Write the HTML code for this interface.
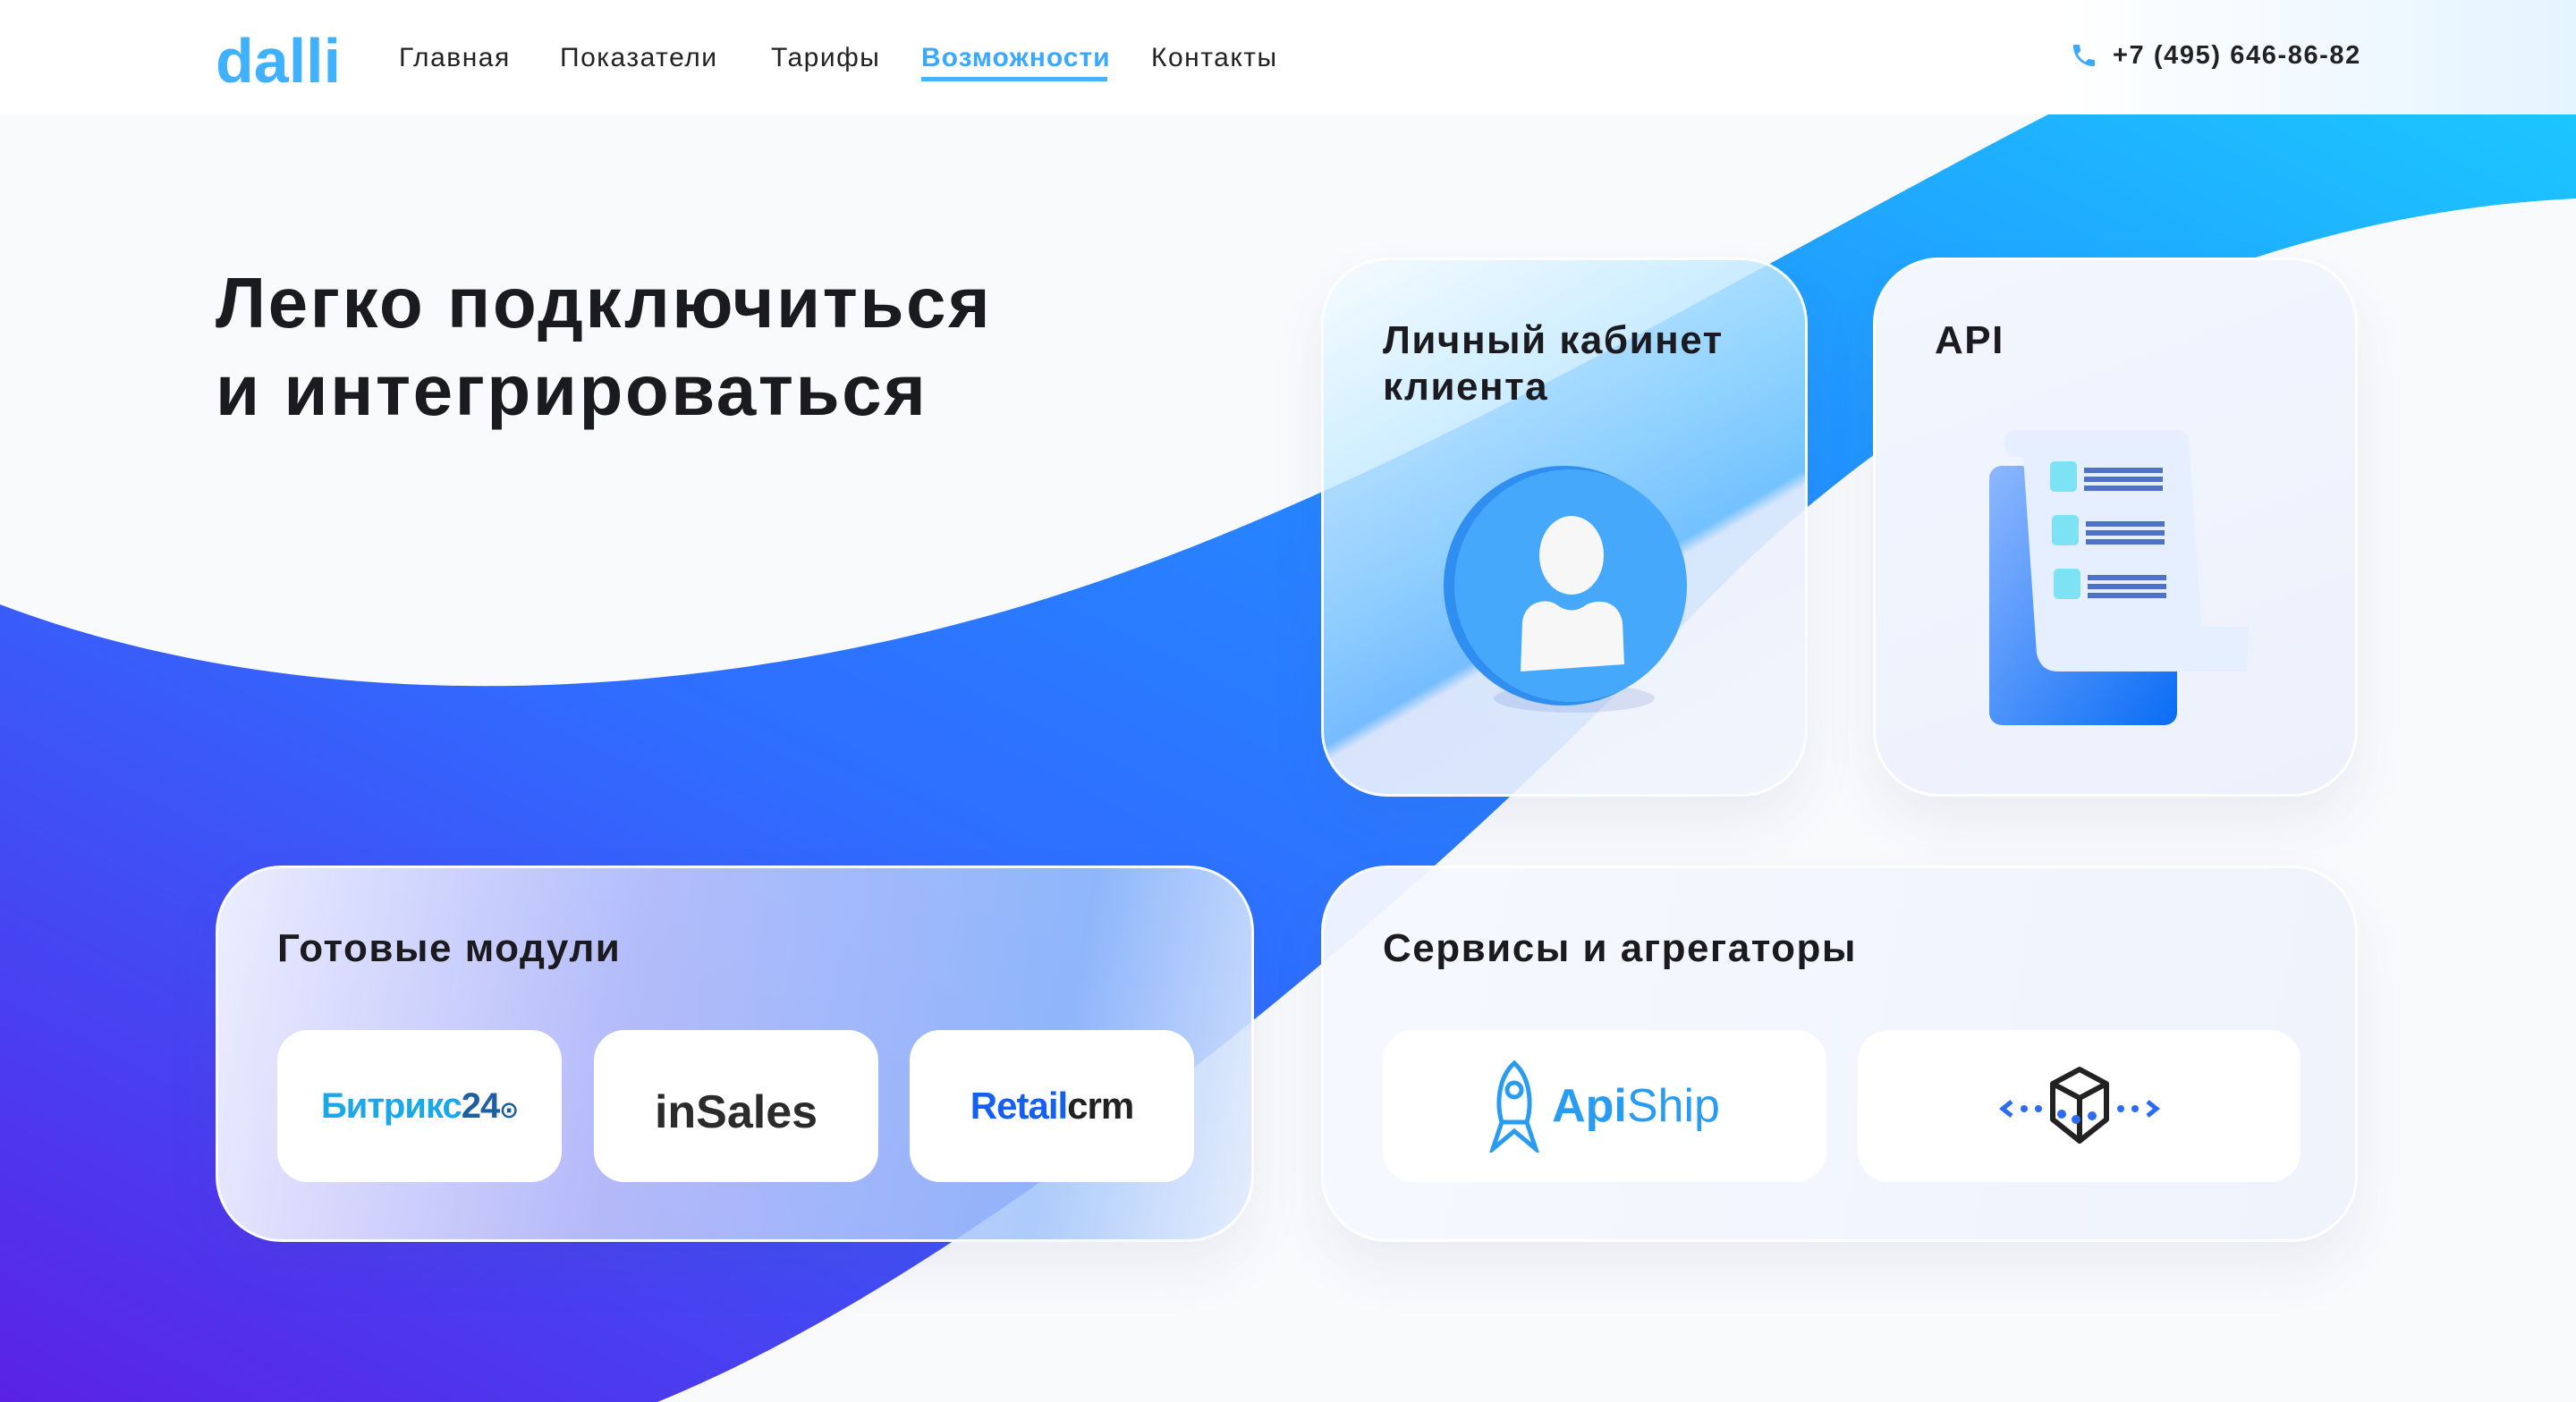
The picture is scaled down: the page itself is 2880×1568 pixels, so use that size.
<!DOCTYPE html>
<html><head><meta charset="utf-8"><style>
*{margin:0;padding:0;box-sizing:border-box}
body{width:2880px;height:1568px;overflow:hidden;position:relative;background:#f9fafc;font-family:"Liberation Sans","DejaVu Sans",sans-serif;color:#1b1b1f}
#bg{position:absolute;left:0;top:0}
.hdr{position:absolute;left:0;top:0;width:2880px;height:128px;background:linear-gradient(90deg,#fff 0%,#fff 80%,#e4f4ff 100%)}
.logo{position:absolute;left:241px;top:28px;font-size:70px;font-weight:bold;color:#3fb1ff;letter-spacing:0px}
.nav{position:absolute;top:48px;font-size:30px;color:#222;letter-spacing:1.5px}
.act{color:#3aa8ff;font-weight:bold}
.ul{position:absolute;left:1030px;top:86px;width:208px;height:5px;background:#45b4ff}
.phone{position:absolute;left:2362px;top:46px;font-size:29px;font-weight:bold;color:#222;letter-spacing:1.6px}
h1{position:absolute;left:241px;top:290px;font-size:80px;line-height:98px;font-weight:bold;color:#1b1b1f;letter-spacing:2.5px}
.card{position:absolute;border-radius:74px;border:3px solid rgba(255,255,255,.9);background:rgba(248,250,255,.82);box-shadow:0 30px 60px rgba(60,80,140,.08)}
.ct{position:absolute;left:66px;font-size:44px;font-weight:bold;line-height:52px;color:#1b1b1f;letter-spacing:1.5px}
.tile{position:absolute;top:181px;height:170px;background:#fff;border-radius:34px;display:flex;align-items:center;justify-content:center}
</style></head><body>
<svg id="bg" width="2880" height="1568">
<defs><linearGradient id="g" x1="0" y1="1" x2="1" y2="0">
<stop offset="0" stop-color="#5a22e6"/><stop offset=".4" stop-color="#2f6dff"/><stop offset=".7" stop-color="#2290ff"/><stop offset="1" stop-color="#1cc6ff"/></linearGradient></defs>
<path d="M0,676 C300,790 700,800 1100,690 C1500,580 1900,330 2290,128 L2880,128 L2880,222 C2500,240 2150,420 1900,680 C1600,1000 1100,1420 735,1568 L0,1568 Z" fill="url(#g)"/>
</svg>
<div class="hdr"></div>
<div class="logo">dalli</div>
<div class="nav" style="left:446px">Главная</div>
<div class="nav" style="left:626px">Показатели</div>
<div class="nav" style="left:862px">Тарифы</div>
<div class="nav act" style="left:1030px;letter-spacing:1px">Возможности</div>
<div class="ul"></div>
<div class="nav" style="left:1287px">Контакты</div>
<svg style="position:absolute;left:2314px;top:46px" width="32" height="32" viewBox="0 0 24 24"><path d="M6.6 10.8c1.4 2.8 3.8 5.1 6.6 6.6l2.2-2.2c.3-.3.7-.4 1-.2 1.1.4 2.3.6 3.6.6.6 0 1 .4 1 1V20c0 .6-.4 1-1 1C10.6 21 3 13.4 3 4c0-.6.4-1 1-1h3.5c.6 0 1 .4 1 1 0 1.3.2 2.5.6 3.6.1.3 0 .7-.2 1z" fill="#3aa8ff"/></svg>
<div class="phone">+7 (495) 646-86-82</div>
<h1>Легко подключиться<br>и интегрироваться</h1>

<div class="card" style="left:1477px;top:288px;width:544px;height:603px;background:linear-gradient(150deg,rgba(245,250,255,.9) 0%,rgba(170,225,255,.8) 45%,rgba(150,215,255,.7) 60%,rgba(235,240,252,.9) 62%,rgba(240,244,252,.9) 100%)">
<div class="ct" style="top:64px">Личный кабинет<br>клиента</div>
<svg style="position:absolute;left:130px;top:220px" width="290" height="300" viewBox="0 0 290 300">
<ellipse cx="150" cy="270" rx="90" ry="16" fill="rgba(90,120,200,.18)"/>
<circle cx="138" cy="144" r="134" fill="#2f8ef0"/>
<circle cx="146" cy="144" r="130" fill="#45a8fb"/>
<ellipse cx="147" cy="110" rx="36" ry="44" fill="#f7f7f8"/>
<path d="M90,240 L92,185 C95,160 120,158 130,165 Q147,178 164,165 C180,158 200,162 204,185 L206,232 Z" fill="#f7f7f8"/>
</svg>
</div>

<div class="card" style="left:2094px;top:288px;width:542px;height:603px;background:linear-gradient(160deg,#f1f6ff,#eef1fb)">
<div class="ct" style="top:64px">API</div>
<svg style="position:absolute;left:125px;top:180px" width="300" height="340" viewBox="0 0 300 340">
<defs><linearGradient id="dg" x1="0" y1="0" x2="1" y2="1"><stop offset="0" stop-color="#8db8ff"/><stop offset="1" stop-color="#0a6cf5"/></linearGradient></defs>
<rect x="2" y="50" width="210" height="290" rx="14" fill="url(#dg)"/>
<path d="M30,10 C15,10 15,40 30,40 L40,40 L55,260 C58,272 64,280 80,280 L290,280 L292,230 L240,230 L225,20 C225,14 220,10 210,10 Z" fill="#e6efff"/>
<g fill="#7de3f4"><rect x="70" y="45" width="30" height="34" rx="5"/><rect x="72" y="105" width="30" height="34" rx="5"/><rect x="74" y="165" width="30" height="34" rx="5"/></g>
<g fill="#4f72c8"><rect x="108" y="52" width="88" height="6"/><rect x="108" y="62" width="88" height="6"/><rect x="108" y="72" width="88" height="6"/>
<rect x="110" y="112" width="88" height="6"/><rect x="110" y="122" width="88" height="6"/><rect x="110" y="132" width="88" height="6"/>
<rect x="112" y="172" width="88" height="6"/><rect x="112" y="182" width="88" height="6"/><rect x="112" y="192" width="88" height="6"/></g>
</svg>
</div>

<div class="card" style="left:241px;top:968px;width:1161px;height:421px;background:linear-gradient(100deg,rgba(245,246,255,.95) 0%,rgba(200,205,250,.85) 40%,rgba(160,195,250,.85) 80%,rgba(225,235,252,.9) 100%)">
<div class="ct" style="top:64px">Готовые модули</div>
<div class="tile" style="left:66px;width:318px"><span style="font-size:40px;font-weight:bold;color:#1aa8e8;letter-spacing:-1px">Битрикс<span style="color:#1e5fa0">24</span><span style="font-size:26px;color:#1e5fa0">⊙</span></span></div>
<div class="tile" style="left:420px;width:318px"><span style="font-size:52px;font-weight:bold;color:#2b2b2b;margin-top:14px">inSales</span></div>
<div class="tile" style="left:773px;width:318px"><span style="font-size:42px;font-weight:bold;color:#1560f0;letter-spacing:-1px">Retail<span style="color:#222">crm</span></span></div>
</div>

<div class="card" style="left:1477px;top:968px;width:1159px;height:421px;background:linear-gradient(100deg,rgba(246,248,255,.95),rgba(238,242,252,.95))">
<div class="ct" style="top:64px">Сервисы и агрегаторы</div>
<div class="tile" style="left:66px;width:496px"><svg width="56" height="104" viewBox="0 0 56 104" style="margin-right:14px"><path d="M28,4 C10,20 8,50 14,70 L4,100 L28,80 L52,100 L42,70 C48,50 46,20 28,4 Z M14,70 L42,70" fill="none" stroke="#2a9cf0" stroke-width="5"/><circle cx="28" cy="34" r="8" fill="none" stroke="#2a9cf0" stroke-width="5"/></svg><span style="font-size:52px;color:#2a9cf0"><b>Api</b>Ship</span></div>
<div class="tile" style="left:597px;width:495px"><svg width="180" height="110" viewBox="0 0 180 110"><path d="M60,30 L90,14 L120,30 L90,46 Z M60,30 L60,70 L90,94 L120,70 L120,30 M90,46 L90,94" fill="none" stroke="#222" stroke-width="6" stroke-linejoin="round"/><path d="M14,50 L4,58 L14,66 M166,50 L176,58 L166,66" fill="none" stroke="#2b6cf0" stroke-width="5"/><g fill="#2b6cf0"><circle cx="28" cy="58" r="4"/><circle cx="44" cy="58" r="4"/><circle cx="70" cy="64" r="5"/><circle cx="86" cy="70" r="5"/><circle cx="104" cy="66" r="5"/><circle cx="136" cy="58" r="4"/><circle cx="152" cy="58" r="4"/></g></svg></div>
</div>
</body></html>
